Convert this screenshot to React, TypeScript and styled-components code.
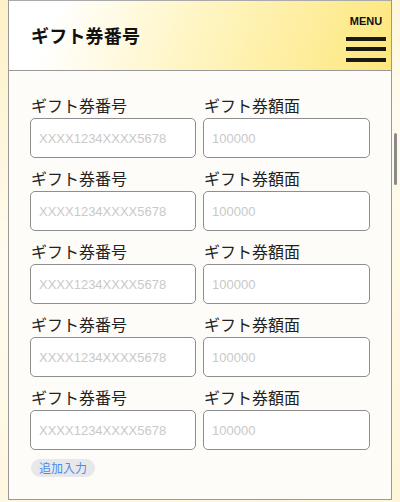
import React from 'react';
import styled, { createGlobalStyle } from 'styled-components';

const GlobalStyle = createGlobalStyle`
  html, body {
    margin: 0;
    padding: 0;
  }
  body {
    width: 400px;
    height: 502px;
    overflow: hidden;
    background: linear-gradient(160deg, #fdf1c6 0%, #fffbee 40%, #fef6d8 100%);
    font-family: "Noto Sans CJK JP", "Noto Sans", sans-serif;
    color: #222;
  }
`;

const Page = styled.div`
  position: relative;
  height: 502px;
  padding: 0 8px;
  box-sizing: border-box;
`;

const Panel = styled.div`
  height: 500px;
  border: 1px solid #999;
  border-top: none;
  box-sizing: border-box;
  background: #fdfcf8;
  display: flex;
  flex-direction: column;
`;

const Header = styled.header`
  height: 71px;
  box-sizing: border-box;
  border-top: 1px solid #aaa;
  border-bottom: 1px solid #999;
  background: linear-gradient(110deg, #ffffff 12%, #fff6c8 45%, #fde77c 100%);
  display: flex;
  align-items: center;
  justify-content: space-between;
  padding: 0 4px 0 22px;
`;

const Title = styled.h1`
  margin: 0 0 2px;
  font-size: 18px;
  font-weight: 700;
  color: #111;
  letter-spacing: 0.2px;
`;

const MenuButton = styled.button`
  align-self: flex-start;
  border: none;
  background: none;
  padding: 14px 0 0;
  width: 42px;
  display: flex;
  flex-direction: column;
  align-items: center;
  cursor: pointer;
`;

const MenuLabel = styled.span`
  font-family: "Liberation Sans", Arial, sans-serif;
  font-size: 11px;
  font-weight: 700;
  color: #111;
  line-height: 12px;
  margin-bottom: 3px;
`;

const Bar = styled.span`
  display: block;
  width: 40px;
  height: 4px;
  background: #1a1a12;
  margin-top: 6.5px;
  &:first-of-type {
    margin-top: 0;
  }
`;

const Body = styled.div`
  flex: 1;
  padding: 24px 20px 0 21px;
`;

const Grid = styled.div`
  display: grid;
  grid-template-columns: 166px 167px;
  column-gap: 7px;
  row-gap: 10px;
`;

const Field = styled.label`
  display: flex;
  flex-direction: column;
`;

const Label = styled.span`
  font-size: 16px;
  line-height: 20px;
  color: #222;
  margin: 0 0 3px 1px;
`;

const Input = styled.input`
  height: 40px;
  box-sizing: border-box;
  border: 1px solid #8e8e8e;
  border-radius: 5px;
  background: #fff;
  padding: 0 8px;
  font-family: "Liberation Sans", Arial, sans-serif;
  font-size: 13px;
  outline: none;
  &::placeholder {
    color: #c9c9c9;
  }
`;

const AddButton = styled.button`
  margin: 9px 0 0 1px;
  height: 18px;
  padding: 0 8px;
  border: none;
  border-radius: 9px;
  background: #e8e8ea;
  color: #4a8cf0;
  font-family: "Noto Sans CJK JP", sans-serif;
  font-size: 12px;
  line-height: 18px;
  cursor: pointer;
`;

const ScrollThumb = styled.div`
  position: absolute;
  left: 394px;
  top: 133px;
  width: 3px;
  height: 52px;
  border-radius: 2px;
  background: #8a8a8a;
`;

const rows = [0, 1, 2, 3, 4];

export default function App() {
  return (
    <>
      <GlobalStyle />
      <Page>
        <Panel>
          <Header>
            <Title>ギフト券番号</Title>
            <MenuButton>
              <MenuLabel>MENU</MenuLabel>
              <Bar />
              <Bar />
              <Bar />
            </MenuButton>
          </Header>
          <Body>
            <Grid>
              {rows.map((i) => (
                <React.Fragment key={i}>
                  <Field>
                    <Label>ギフト券番号</Label>
                    <Input placeholder="XXXX1234XXXX5678" />
                  </Field>
                  <Field>
                    <Label>ギフト券額面</Label>
                    <Input placeholder="100000" />
                  </Field>
                </React.Fragment>
              ))}
            </Grid>
            <AddButton>追加入力</AddButton>
          </Body>
        </Panel>
        <ScrollThumb />
      </Page>
    </>
  );
}
